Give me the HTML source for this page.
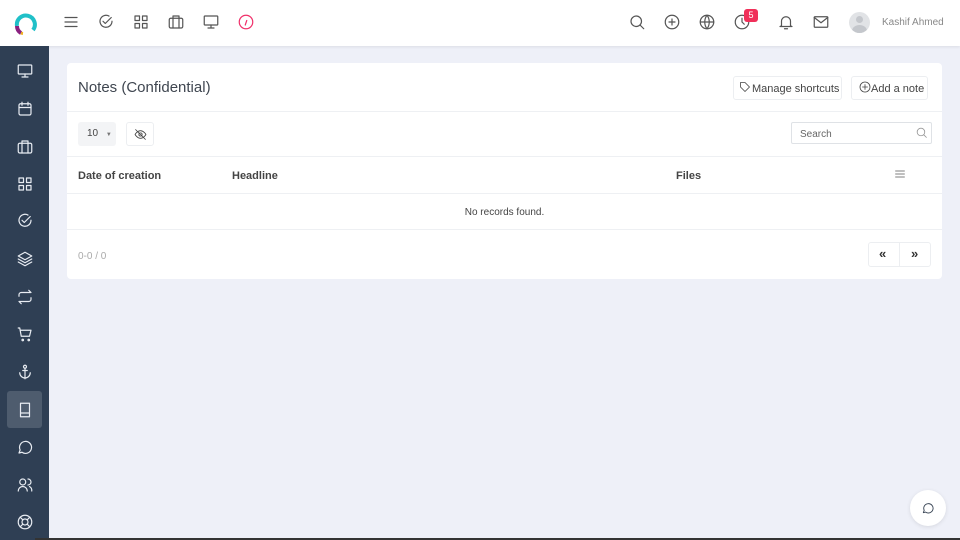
<!DOCTYPE html>
<html><head><meta charset="utf-8"><style>
*{box-sizing:border-box;margin:0;padding:0}
body{width:960px;height:540px;overflow:hidden;background:#eef0f8;font-family:"Liberation Sans",sans-serif;position:relative;color:#444}
.top{position:absolute;left:0;top:0;width:960px;height:46px;background:#fff;box-shadow:0 1px 3px rgba(0,0,0,.08)}
.side{position:absolute;left:0;top:46px;width:49px;height:494px;background:#2f3f54}
.ic{position:absolute;width:18px;height:18px;fill:none;stroke-width:1.6;stroke-linecap:round;stroke-linejoin:round}
.top .ic{stroke:#555}
.side .ic{stroke:#e8ecf2}
.act{position:absolute;left:7px;top:345px;width:35px;height:37px;background:#4e5c6e;border-radius:3px}
.card{position:absolute;left:67px;top:63px;width:875px;height:216px;background:#fff;border-radius:4px}
.hr{position:absolute;left:0;width:875px;height:1px;background:#eef0f3}
.btn{position:absolute;border:1px solid #eceef1;border-radius:3px;font-size:11px;color:#444;height:24px;line-height:24px}
.th{position:absolute;top:107px;font-size:11px;font-weight:bold;color:#444}
</style></head><body>
<div class="top">
<svg style="position:absolute;left:13px;top:12px" width="24" height="24" viewBox="0 0 24 24"><path d="M4 14 A9 9 0 1 1 20 18" fill="none" stroke="#20c0c8" stroke-width="4"/><path d="M4 14 A8 8 0 0 0 8 21" fill="none" stroke="#8a2080" stroke-width="4"/><path d="M8 21 A8 8 0 0 0 10 21.5" fill="none" stroke="#f0b020" stroke-width="3"/></svg>
<svg class="ic" style="left:62px;top:13px" viewBox="0 0 24 24"><path d="M4 6h16M4 12h16M4 18h16"/></svg>
<svg class="ic" style="left:97px;top:13px" viewBox="0 0 24 24"><path d="M20 11a8 8 0 1 1-4-6.9"/><path d="M8 11l3 3 8-8"/></svg>
<svg class="ic" style="left:132px;top:13px" viewBox="0 0 24 24"><rect x="4" y="4" width="6" height="6"/><rect x="14" y="4" width="6" height="6"/><rect x="4" y="14" width="6" height="6"/><rect x="14" y="14" width="6" height="6"/></svg>
<svg class="ic" style="left:167px;top:13px" viewBox="0 0 24 24"><rect x="3" y="7" width="18" height="13" rx="2"/><path d="M8 7V4h8v3M8 7v13M16 7v13"/></svg>
<svg class="ic" style="left:202px;top:13px" viewBox="0 0 24 24"><rect x="3" y="4" width="18" height="12" rx="1"/><path d="M12 16v4M8 20h8"/></svg>
<svg class="ic" style="left:237px;top:13px;stroke:#f0306a" viewBox="0 0 24 24"><circle cx="12" cy="12" r="9"/><path d="M11 16l2-6"/></svg>
<svg class="ic" style="left:628px;top:13px" viewBox="0 0 24 24"><circle cx="11" cy="11" r="7"/><path d="M16 16l5 5"/></svg>
<svg class="ic" style="left:663px;top:13px" viewBox="0 0 24 24"><circle cx="12" cy="12" r="9"/><path d="M12 8v8M8 12h8"/></svg>
<svg class="ic" style="left:698px;top:13px" viewBox="0 0 24 24"><circle cx="12" cy="12" r="9"/><path d="M3 12h18M12 3c-4 5-4 13 0 18M12 3c4 5 4 13 0 18"/></svg>
<svg class="ic" style="left:733px;top:13px" viewBox="0 0 24 24"><circle cx="12" cy="12" r="9"/><path d="M12 7v5l3 3"/></svg>
<div style="position:absolute;left:744px;top:9px;width:14px;height:13px;background:#f0305a;border-radius:3px;color:#fff;font-size:9px;text-align:center;line-height:13px">5</div>
<svg class="ic" style="left:777px;top:13px" viewBox="0 0 24 24"><path d="M6 17V11a6 6 0 0 1 12 0v6l2 1H4zM10 21h4"/></svg>
<svg class="ic" style="left:812px;top:13px" viewBox="0 0 24 24"><rect x="3" y="5" width="18" height="14" rx="1"/><path d="M3 6l9 7 9-7"/></svg>
<div style="position:absolute;left:849px;top:12px;width:21px;height:21px;border-radius:50%;background:#e1e3e6;overflow:hidden"><div style="position:absolute;left:7px;top:4px;width:7px;height:7px;border-radius:50%;background:#c4c7cc"></div><div style="position:absolute;left:3px;top:13px;width:15px;height:12px;border-radius:50%;background:#c4c7cc"></div></div>
<div style="position:absolute;left:882px;top:17px;font-size:10px;color:#888">Kashif Ahmed</div>
</div>
<div class="side">
<div class="act"></div>
<svg class="ic" style="left:16px;top:16px" viewBox="0 0 24 24"><rect x="3" y="4" width="18" height="12" rx="1"/><path d="M12 16v4M8 20h8"/></svg>
<svg class="ic" style="left:16px;top:54px" viewBox="0 0 24 24"><rect x="4" y="5" width="16" height="15" rx="2"/><path d="M4 10h16M8 3v4M16 3v4"/></svg>
<svg class="ic" style="left:16px;top:92px" viewBox="0 0 24 24"><rect x="3" y="7" width="18" height="13" rx="2"/><path d="M8 7V4h8v3M8 7v13M16 7v13"/></svg>
<svg class="ic" style="left:16px;top:129px" viewBox="0 0 24 24"><rect x="4" y="4" width="6" height="6"/><rect x="14" y="4" width="6" height="6"/><rect x="4" y="14" width="6" height="6"/><rect x="14" y="14" width="6" height="6"/></svg>
<svg class="ic" style="left:16px;top:166px" viewBox="0 0 24 24"><path d="M20 11a8 8 0 1 1-4-6.9"/><path d="M8 11l3 3 8-8"/></svg>
<svg class="ic" style="left:16px;top:204px" viewBox="0 0 24 24"><path d="M12 3l9 5-9 5-9-5zM3 12l9 5 9-5M3 16l9 5 9-5"/></svg>
<svg class="ic" style="left:16px;top:242px" viewBox="0 0 24 24"><path d="M4 11V9a3 3 0 0 1 3-3h13l-3-3M20 13v2a3 3 0 0 1-3 3H4l3 3"/></svg>
<svg class="ic" style="left:16px;top:279px" viewBox="0 0 24 24"><path d="M3 4h2l2 11h11l2-8H6"/><circle cx="9" cy="20" r="1"/><circle cx="17" cy="20" r="1"/></svg>
<svg class="ic" style="left:16px;top:317px" viewBox="0 0 24 24"><circle cx="12" cy="5" r="2"/><path d="M12 7v14M5 13a7 7 0 0 0 14 0M9 10h6"/></svg>
<svg class="ic" style="left:16px;top:355px" viewBox="0 0 24 24"><path d="M6 3h12v18H6zM6 16h12"/></svg>
<svg class="ic" style="left:16px;top:392px" viewBox="0 0 24 24"><path d="M4 20l1.5-4A8 8 0 1 1 8 19z"/></svg>
<svg class="ic" style="left:16px;top:430px" viewBox="0 0 24 24"><circle cx="9" cy="8" r="4"/><path d="M3 20a6 6 0 0 1 12 0M16 4a4 4 0 0 1 0 8M18 14a6 6 0 0 1 3 6"/></svg>
<svg class="ic" style="left:16px;top:467px" viewBox="0 0 24 24"><circle cx="12" cy="12" r="9"/><circle cx="12" cy="12" r="4"/><path d="M5.6 5.6l3.6 3.6M18.4 5.6l-3.6 3.6M5.6 18.4l3.6-3.6M18.4 18.4l-3.6-3.6"/></svg>
</div>
<div class="card">
<div style="position:absolute;left:11px;top:16px;font-size:15px;color:#3f4650">Notes (Confidential)</div>
<div class="btn" style="left:666px;top:13px;width:109px;padding-left:18px">Manage shortcuts</div>
<svg class="ic" style="left:672px;top:18px;width:12px;height:12px;stroke:#444" viewBox="0 0 24 24"><path d="M3 3h9l9 9-9 9-9-9z"/></svg>
<div class="btn" style="left:784px;top:13px;width:77px;padding-left:19px">Add a note</div>
<svg class="ic" style="left:792px;top:18px;width:12px;height:12px;stroke:#444" viewBox="0 0 24 24"><circle cx="12" cy="12" r="10"/><path d="M12 7v10M7 12h10"/></svg>
<div class="hr" style="top:48px"></div>
<div style="position:absolute;left:11px;top:59px;width:38px;height:24px;background:#f3f4f6;border-radius:3px;font-size:10px;line-height:24px;padding-left:9px">10 <span style="font-size:6px;color:#777;margin-left:5px">▼</span></div>
<div class="btn" style="left:59px;top:59px;width:28px;height:24px"></div>
<svg class="ic" style="left:67px;top:65px;width:13px;height:13px;stroke:#444" viewBox="0 0 24 24"><path d="M2 12s4-7 10-7 10 7 10 7-4 7-10 7S2 12 2 12z"/><circle cx="12" cy="12" r="3"/><path d="M3 3l18 18"/></svg>
<div style="position:absolute;left:724px;top:59px;width:141px;height:22px;border:1px solid #dfe2e6;border-radius:2px;font-size:10px;color:#666;line-height:24px;padding-left:8px">Search</div>
<svg class="ic" style="left:848px;top:63px;width:13px;height:13px;stroke:#999" viewBox="0 0 24 24"><circle cx="11" cy="11" r="7"/><path d="M16 16l5 5"/></svg>
<div class="hr" style="top:93px"></div>
<div class="th" style="left:11px">Date of creation</div>
<div class="th" style="left:165px">Headline</div>
<div class="th" style="left:609px">Files</div>
<svg class="ic" style="left:827px;top:105px;width:12px;height:12px;stroke:#555" viewBox="0 0 24 24"><path d="M3 6h18M3 12h18M3 18h18"/></svg>
<div class="hr" style="top:130px"></div>
<div style="position:absolute;left:0;width:875px;top:144px;text-align:center;font-size:10px;color:#444">No records found.</div>
<div class="hr" style="top:166px"></div>
<div style="position:absolute;left:11px;top:188px;font-size:10px;color:#aaa">0-0 / 0</div>
<div class="btn" style="left:801px;top:179px;width:63px;height:25px"></div>
<div style="position:absolute;left:832px;top:180px;width:1px;height:23px;background:#eceef1"></div>
<div style="position:absolute;left:812px;top:183px;font-size:13px;font-weight:bold;color:#333">«</div>
<div style="position:absolute;left:844px;top:183px;font-size:13px;font-weight:bold;color:#333">»</div>
</div>
<div style="position:absolute;left:910px;top:490px;width:36px;height:36px;border-radius:50%;background:#fff;box-shadow:0 1px 4px rgba(0,0,0,.1)"></div>
<svg class="ic" style="left:921px;top:501px;width:14px;height:14px;stroke:#3a4656" viewBox="0 0 24 24"><path d="M4 20l1.5-4A8 8 0 1 1 8 19z"/></svg>
<div style="position:absolute;left:35px;top:538px;width:925px;height:2px;background:#333"></div>
</body></html>
